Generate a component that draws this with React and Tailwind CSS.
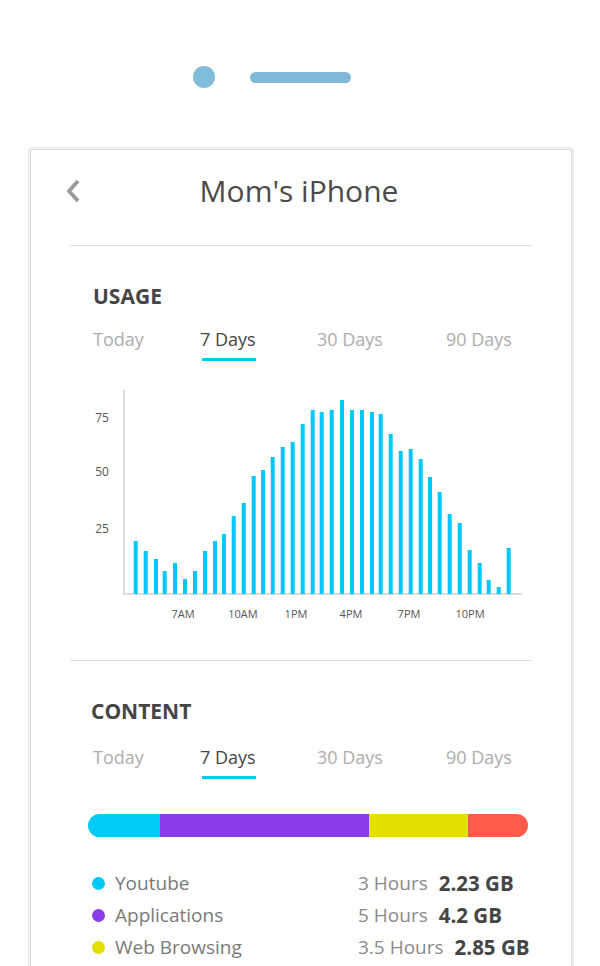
const BARS = [
  [135.7, 53], [145.7, 43], [156, 35], [164.7, 23], [175, 31], [185, 15], [195, 23], [205, 43],
  [215, 53], [224, 60], [233.7, 78], [243.7, 91], [253.7, 118], [263, 124], [272.7, 137], [282.7, 147],
  [292.7, 152], [302.7, 170], [312.7, 184], [321.7, 182], [331.7, 184], [342, 194], [352, 184], [362, 184],
  [372, 182], [380.7, 180], [390.7, 160], [400.7, 143], [410.7, 145], [420.7, 135], [430, 117], [439.7, 102],
  [449.7, 80], [459.7, 71], [469.7, 44], [479.7, 31], [488.7, 14], [498.7, 7], [508.7, 46],
];

const Y_LABELS = [
  { label: '75', y: 34 },
  { label: '50', y: 88 },
  { label: '25', y: 145 },
];

const X_LABELS = [
  { label: '7AM', x: 103 },
  { label: '10AM', x: 163 },
  { label: '1PM', x: 216 },
  { label: '4PM', x: 271 },
  { label: '7PM', x: 329 },
  { label: '10PM', x: 390 },
];

const TABS = ['Today', '7 Days', '30 Days', '90 Days'];

const LEGEND = [
  { name: 'Youtube', hours: '3 Hours', size: '2.23 GB', dot: 'bg-[#00cbf6]' },
  { name: 'Applications', hours: '5 Hours', size: '4.2 GB', dot: 'bg-[#8a3ceb]' },
  { name: 'Web Browsing', hours: '3.5 Hours', size: '2.85 GB', dot: 'bg-[#e3df00]' },
];

function Tabs({ active }) {
  return (
    <div className="grid grid-cols-[107px_117px_129px_auto] items-start">
      {TABS.map((t) => (
        <div key={t} className="flex">
          <div className="flex flex-col items-stretch">
            <span
              className={`text-[18px] leading-[26px] ${t === active ? 'text-[#454545]' : 'text-[#adadad]'}`}
            >
              {t}
            </span>
            <div className={`mt-[6px] h-[3px] ml-[2px] ${t === active ? 'bg-[#00c9f7]' : 'bg-transparent'}`} />
          </div>
        </div>
      ))}
    </div>
  );
}

function UsageChart() {
  return (
    <svg width="460" height="245" viewBox="0 0 460 245" className="ml-[10px] block">
      <line x1="44" y1="5" x2="44" y2="209" stroke="#d2d2d2" strokeWidth="1.5" />
      <line x1="44" y1="209" x2="442" y2="209" stroke="#d2d2d2" strokeWidth="1.5" />
      {BARS.map(([cx, h], i) => (
        <rect key={i} x={cx - 80 - 2} y={209 - h} width="4" height={h} fill="#00c8fa" />
      ))}
      {Y_LABELS.map((l) => (
        <text
          key={l.label}
          x="22"
          y={l.y}
          textAnchor="middle"
          dominantBaseline="middle"
          fontSize="12"
          fill="#555"
          fontFamily="Open Sans, sans-serif"
        >
          {l.label}
        </text>
      ))}
      {X_LABELS.map((l) => (
        <text
          key={l.label}
          x={l.x}
          y="230"
          textAnchor="middle"
          dominantBaseline="middle"
          fontSize="11"
          fill="#555"
          fontFamily="Open Sans, sans-serif"
        >
          {l.label}
        </text>
      ))}
    </svg>
  );
}

export default function App() {
  return (
    <div className="min-h-screen bg-white font-['Open_Sans',sans-serif] overflow-hidden">
      {/* phone top: camera + speaker */}
      <div className="grid grid-cols-[1fr_101px_1fr] pt-[66px] h-[149px] items-start">
        <div className="flex justify-end pr-[35px]">
          <div className="w-[22px] h-[22px] rounded-full bg-[#80bddb]" />
        </div>
        <div className="h-[11px] mt-[6px] rounded-full bg-[#80b9d8]" />
        <div />
      </div>

      {/* screen card */}
      <div className="ml-[30px] w-[542px] border border-[#d6dbde] shadow-[0_0_0_2px_#eceff1] rounded-[2px] pb-[40px]">
        <div className="grid grid-cols-[1fr_auto_1fr] items-center pt-[23px] px-[33px]">
          <svg width="18" height="28" viewBox="0 0 18 28" className="justify-self-start">
            <polyline points="14,4 5,14 14,24" fill="none" stroke="#9b9b9b" strokeWidth="4" strokeLinejoin="round" />
          </svg>
          <h1 className="text-[30px] leading-[36px] text-[#4a4a4a] pr-[4px]">Mom's iPhone</h1>
          <div />
        </div>

        <div className="px-[39px]">
          <div className="mt-[36px] h-px bg-[#dddddd]" />

          <div className="pt-[36px] pl-[23px]">
            <h2 className="text-[21px] leading-[28px] font-bold text-[#454545]">USAGE</h2>
            <div className="mt-[16px]">
              <Tabs active="7 Days" />
            </div>
          </div>

          <div className="mt-[24px]">
            <UsageChart />
          </div>

          <div className="mt-[30px] h-px bg-[#dddddd]" />

          <div className="pt-[36px] pl-[21px]">
            <h2 className="text-[21px] leading-[28px] font-bold text-[#454545]">CONTENT</h2>
            <div className="mt-[19px] pl-[2px]">
              <Tabs active="7 Days" />
            </div>
          </div>

          <div className="pl-[18px] pr-[4px]">
            <div className="mt-[35px] h-[23px] rounded-full overflow-hidden flex">
              <div className="w-[72px] bg-[#00cbf6]" />
              <div className="w-[209px] bg-[#8a3ceb]" />
              <div className="w-[99px] bg-[#e3df00]" />
              <div className="flex-1 bg-[#ff5b4c]" />
            </div>

            <div className="mt-[30px]">
              {LEGEND.map((row) => (
                <div key={row.name} className="grid grid-cols-[270px_1fr] items-center h-[32px] text-[19px]">
                  <div className="flex items-center">
                    <span className={`ml-[4px] w-[13px] h-[13px] rounded-full ${row.dot}`} />
                    <span className="ml-[10px] leading-[32px] text-[#7a7a7a]">{row.name}</span>
                  </div>
                  <div className="flex items-center whitespace-nowrap">
                    <span className="leading-[32px] text-[#8a8a8a]">{row.hours}</span>
                    <span className="ml-[11px] leading-[32px] text-[20.5px] font-bold text-[#444]">{row.size}</span>
                  </div>
                </div>
              ))}
            </div>
          </div>
        </div>
      </div>
    </div>
  );
}
